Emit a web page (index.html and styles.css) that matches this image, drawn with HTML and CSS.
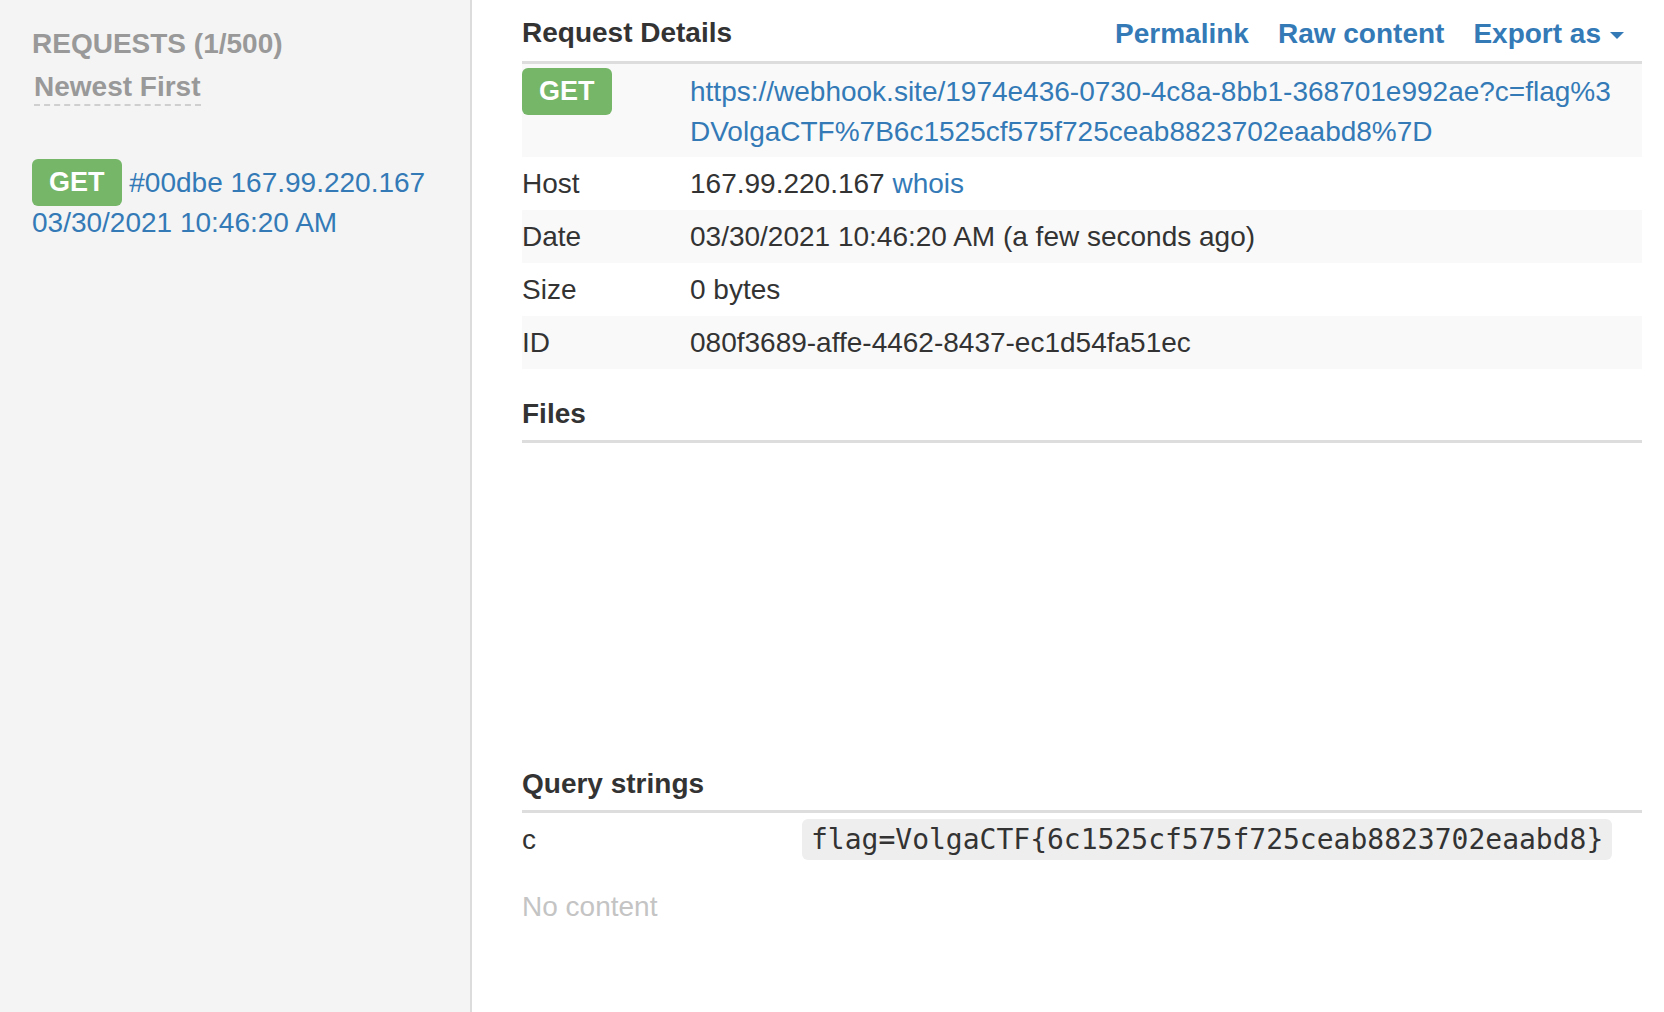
FILE: index.html
```html
<!DOCTYPE html>
<html lang="en">
<head>
<meta charset="utf-8">
<title>Webhook.site - Request Details</title>
<link rel="stylesheet" href="styles.css">
</head>
<body>
<div class="app">
  <aside class="sidebar">
    <div class="sidebar-head">
      <div class="sidebar-title">REQUESTS (1/500)</div>
      <a class="sort-toggle" href="#">Newest First</a>
    </div>
    <ul class="request-list">
      <li class="request-item">
        <span class="label label-get">GET</span> <a class="req-link" href="#">#00dbe 167.99.220.167</a>
        <a class="req-link req-date" href="#">03/30/2021 10:46:20 AM</a>
      </li>
    </ul>
  </aside>

  <main class="content">
    <div class="section-head">
      <h4 class="section-title">Request Details</h4>
      <div class="actions">
        <a href="#">Permalink</a>
        <a href="#">Raw content</a>
        <a href="#">Export as<span class="caret"></span></a>
      </div>
    </div>

    <table class="details">
      <colgroup><col class="col-key"><col class="col-val"></colgroup>
      <tbody>
        <tr>
          <td><span class="label label-get label-lg">GET</span></td>
          <td class="url-cell"><a class="url" href="#">https://webhook.site/1974e436-0730-4c8a-8bb1-368701e992ae?c=flag%3DVolgaCTF%7B6c1525cf575f725ceab8823702eaabd8%7D</a></td>
        </tr>
        <tr>
          <td>Host</td>
          <td>167.99.220.167 <a href="#">whois</a></td>
        </tr>
        <tr>
          <td>Date</td>
          <td>03/30/2021 10:46:20 AM (a few seconds ago)</td>
        </tr>
        <tr>
          <td>Size</td>
          <td>0 bytes</td>
        </tr>
        <tr>
          <td>ID</td>
          <td>080f3689-affe-4462-8437-ec1d54fa51ec</td>
        </tr>
      </tbody>
    </table>

    <section class="files">
      <h4 class="block-title">Files</h4>
      <div class="files-body"></div>
    </section>

    <section class="query">
      <h4 class="block-title">Query strings</h4>
      <table class="query-table">
        <colgroup><col class="col-qkey"><col class="col-qval"></colgroup>
        <tbody>
          <tr>
            <td>c</td>
            <td><code class="qval">flag=VolgaCTF{6c1525cf575f725ceab8823702eaabd8}</code></td>
          </tr>
        </tbody>
      </table>
      <p class="no-content">No content</p>
    </section>
  </main>
</div>
</body>
</html>
```

FILE: styles.css
```css
* {
  box-sizing: border-box;
}

html, body {
  margin: 0;
  padding: 0;
  height: 100%;
}

body {
  font-family: "Liberation Sans", Arial, Helvetica, sans-serif;
  font-size: 28px;
  line-height: 40px;
  color: #333;
  background: #fff;
}

a {
  color: #337ab7;
  text-decoration: none;
}

.app {
  display: flex;
  height: 100vh;
}

/* ---------- sidebar ---------- */
.sidebar {
  flex: 0 0 472px;
  background: #f4f4f4;
  border-right: 2px solid #dcdcdc;
  padding-left: 32px;
}

.sidebar-head {
  padding-top: 24px;
}

.sidebar-title {
  font-weight: bold;
  color: #999;
  line-height: 40px;
}

.sort-toggle {
  display: inline-block;
  margin-top: 5px;
  margin-left: 2px;
  line-height: 35px;
  font-weight: bold;
  color: #999;
  border-bottom: 2px dashed #cfcfcf;
}

.request-list {
  list-style: none;
  margin: 56px 0 0;
  padding: 0;
}

.request-item {
  line-height: 40px;
}

.req-date {
  display: block;
}

.label {
  display: inline-block;
  vertical-align: top;
  height: 47px;
  margin: -4px 0 -3px;
  padding: 0 17px;
  line-height: 47px;
  font-size: 27px;
  font-weight: bold;
  color: #fff;
  background: #75b668;
  border-radius: 6px;
}

/* ---------- main ---------- */
.content {
  flex: 1 1 auto;
  padding: 0 22px 0 50px;
}

.section-head {
  display: flex;
  justify-content: space-between;
  align-items: flex-start;
  height: 64px;
  border-bottom: 3px solid #ddd;
}

.section-title {
  margin: 0;
  padding-top: 13px;
  font-size: 28px;
  line-height: 40px;
  font-weight: bold;
}

.actions {
  display: flex;
  gap: 29px;
  padding-top: 14px;
  padding-right: 18px;
  font-weight: bold;
  line-height: 40px;
}

.caret {
  display: inline-block;
  width: 0;
  height: 0;
  margin-left: 9px;
  vertical-align: middle;
  border-top: 7px solid #337ab7;
  border-left: 7px solid transparent;
  border-right: 7px solid transparent;
}

.details,
.query-table {
  width: 100%;
  table-layout: fixed;
  border-collapse: collapse;
}

.col-key { width: 15%; }
.col-val { width: 85%; }
.col-qkey { width: 25%; }
.col-qval { width: 75%; }

.details td,
.query-table td {
  padding: 7px 0 6px;
  vertical-align: top;
  line-height: 40px;
}

.details tr:nth-child(odd) {
  background: #f9f9f9;
}

.details .url-cell {
  padding: 8px 20px 5px 0;
}

.label-lg {
  margin: -3px 0 0;
}

.url {
  word-break: break-all;
}

.block-title {
  margin: 0;
  padding-bottom: 6px;
  font-size: 28px;
  line-height: 40px;
  font-weight: bold;
  border-bottom: 3px solid #ddd;
}

.files {
  margin-top: 25px;
}

.files-body {
  height: 321px;
}

.query-table td {
  padding: 7px 0 5px;
}

.qval {
  display: inline-block;
  vertical-align: top;
  margin-top: -1px;
  padding: 4px 9px;
  line-height: 33px;
  font-family: "DejaVu Sans Mono", Menlo, monospace;
  font-size: 28px;
  color: #333;
  background: #eee;
  border-radius: 6px;
}

.no-content {
  margin: 22px 0 0;
  color: #c4c4c4;
  line-height: 40px;
}
```
